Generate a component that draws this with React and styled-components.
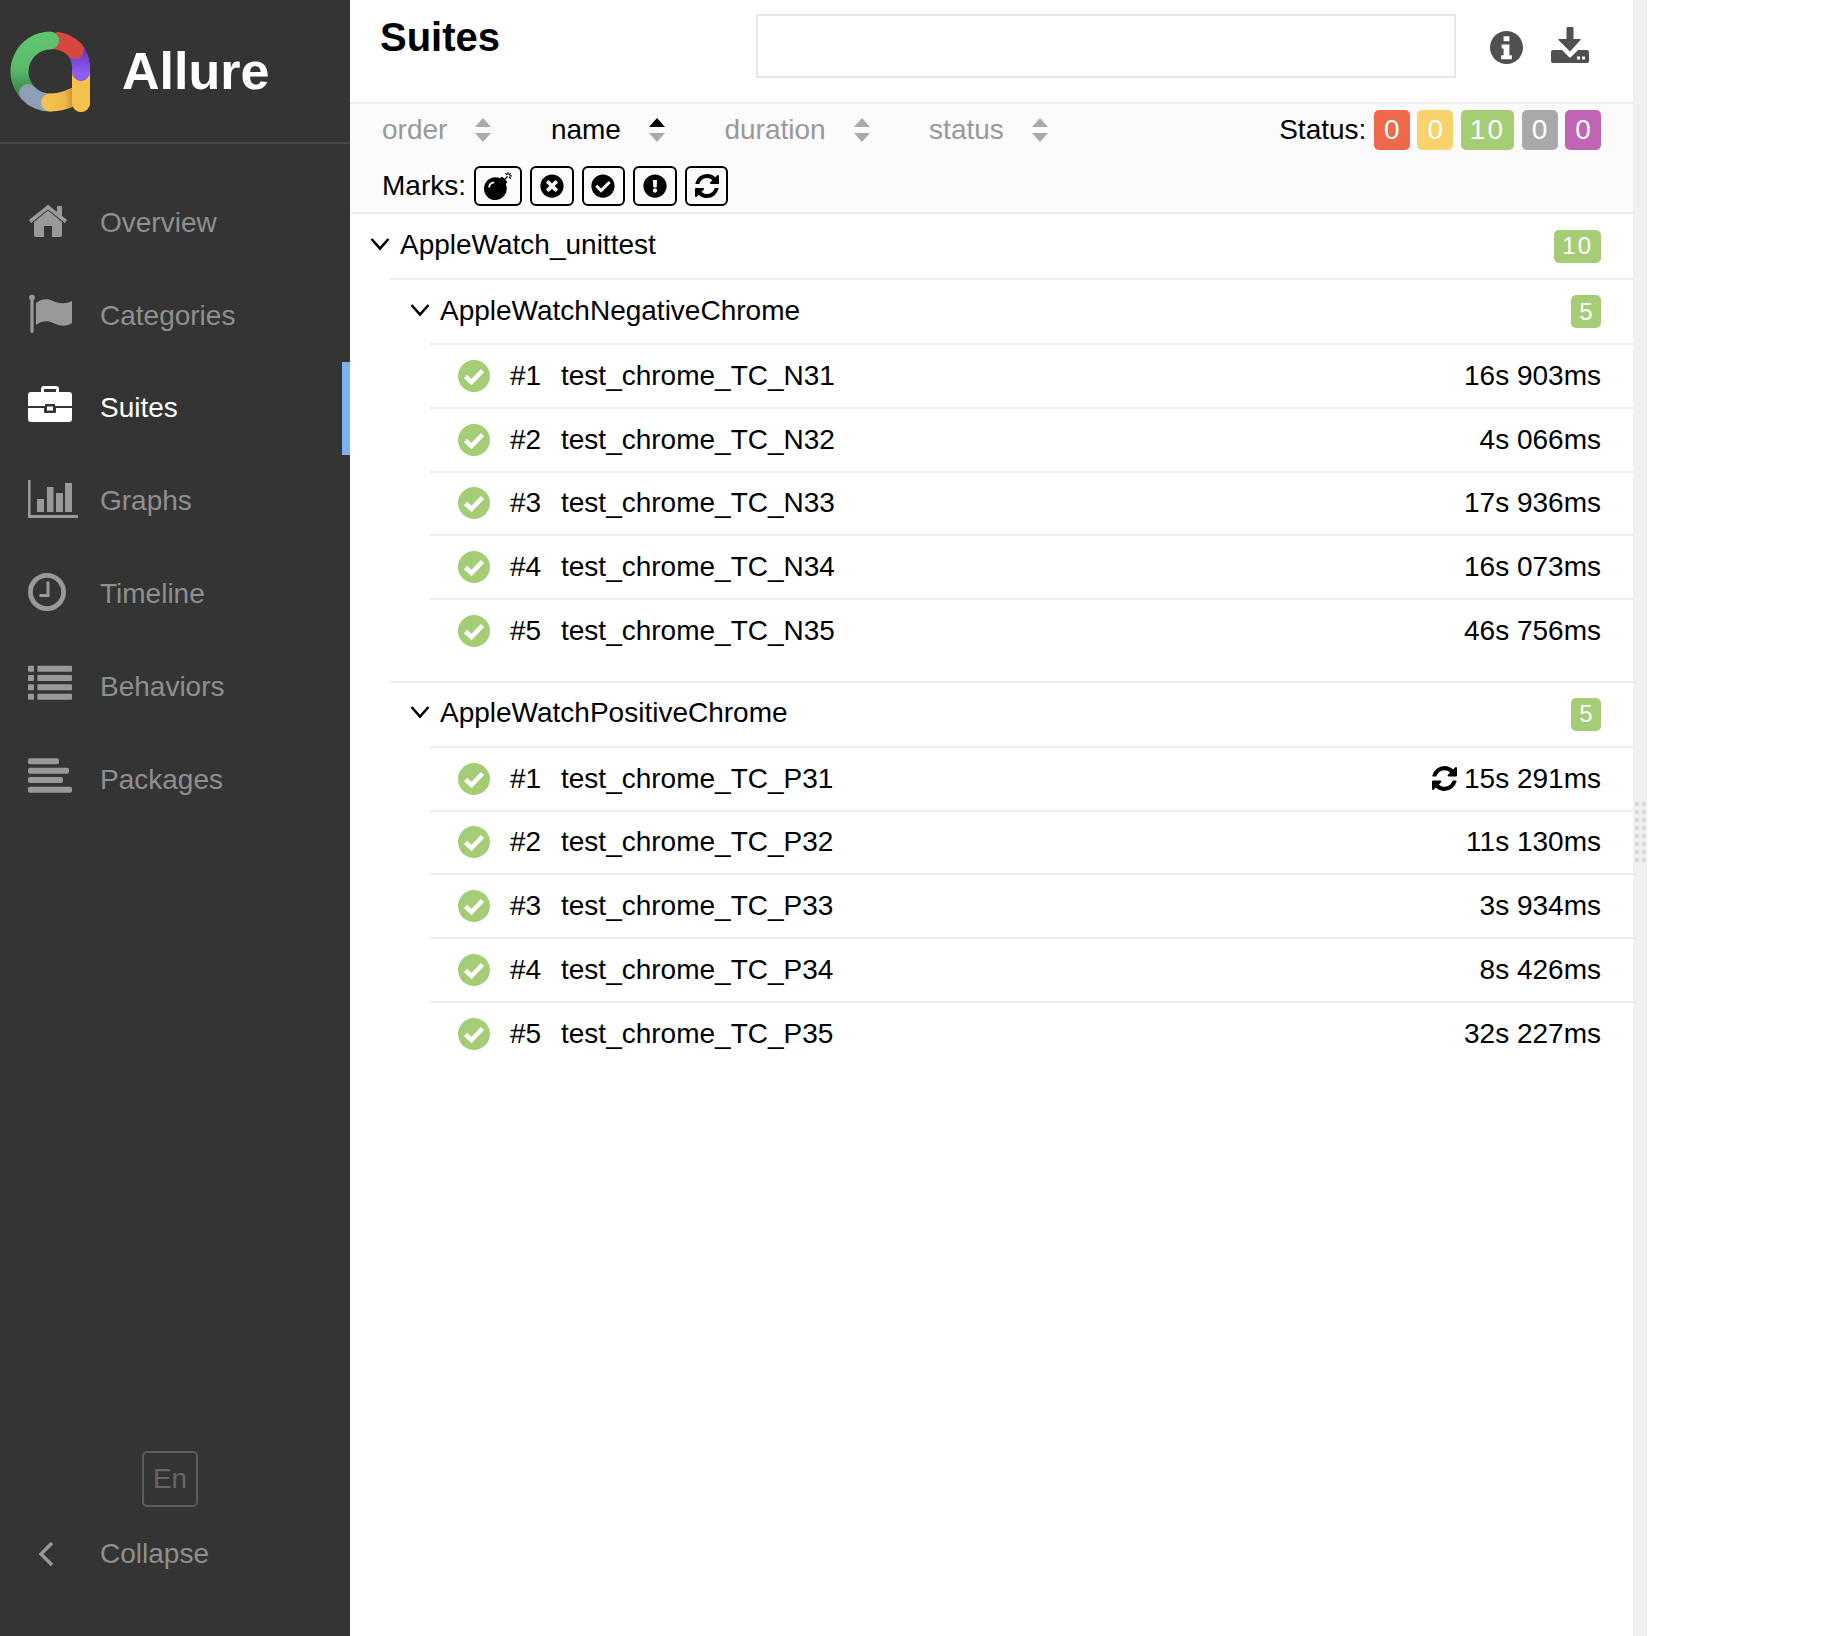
import styled, { createGlobalStyle } from "styled-components";
import {
  FaBomb,
  FaTimesCircle,
  FaCheckCircle,
  FaExclamationCircle,
} from "react-icons/fa";

const GlobalStyle = createGlobalStyle`
  html, body { margin: 0; padding: 0; background: #fff; }
  body { font-family: "Liberation Sans", Arial, sans-serif; font-size: 28px; color: #000; }
  * { box-sizing: border-box; }
`;

const Page = styled.div`
  display: flex;
  height: 1636px;
  overflow: hidden;
`;

const Sidebar = styled.aside`
  flex: 0 0 350px;
  display: flex;
  flex-direction: column;
  background: #343434;
  color: #8f8f8f;
`;

const Brand = styled.div`
  height: 144px;
  display: flex;
  align-items: center;
  gap: 28px;
  padding: 0 0 0 10px;
  border-bottom: 2px solid #474747;
`;

const BrandName = styled.span`
  font-size: 52px;
  font-weight: 700;
  color: #fff;
`;

const Nav = styled.nav`
  padding-top: 32.5px;
`;

const NavItem = styled.a`
  display: flex;
  align-items: center;
  height: 92.8px;
  padding-left: 28px;
  color: ${(p) => (p.$active ? "#fff" : "#8f8f8f")};
  border-right: 8px solid ${(p) => (p.$active ? "#7ab2ed" : "transparent")};
`;

const NavIcon = styled.svg`
  flex: 0 0 50px;
  width: 50px;
  height: 48px;
  margin-right: 22px;
  fill: ${(p) => (p.$active ? "#fff" : "#999")};
  color: ${(p) => (p.$active ? "#fff" : "#999")};
`;

const SideFooter = styled.div`
  margin-top: auto;
  padding-bottom: 36px;
`;

const LangButton = styled.div`
  width: 56px;
  height: 56px;
  margin-left: 142px;
  display: flex;
  align-items: center;
  justify-content: center;
  border: 2px solid #5c5c5c;
  border-radius: 5px;
  color: #666;
`;

const Main = styled.main`
  flex: 0 0 1283px;
  display: flex;
  flex-direction: column;
`;

const Header = styled.header`
  height: 102px;
  display: flex;
  align-items: flex-start;
  padding-left: 30px;
`;

const Title = styled.h1`
  flex: 0 0 376px;
  margin: 14px 0 0;
  font-size: 40px;
  line-height: 46px;
  font-weight: 700;
`;

const Search = styled.input`
  width: 700px;
  height: 64px;
  margin-top: 14px;
  border: 2px solid #e8e8e8;
  background: #fff;
  outline: none;
`;

const HeaderActions = styled.div`
  display: flex;
  align-items: flex-start;
  gap: 27px;
  margin: 27px 0 0 33px;
`;

const InfoGlyph = styled.svg`
  width: 35px;
  height: 35px;
  margin-top: 3px;
`;

const SortBar = styled.section`
  height: 112px;
  background: #fbfbfb;
  border-top: 2px solid #eeeeee;
  border-bottom: 2px solid #eeeeee;
  padding: 0 32px;
`;

const SortRow = styled.div`
  display: flex;
  align-items: center;
  justify-content: space-between;
  height: 52px;
`;

const SortColumns = styled.div`
  display: flex;
  gap: 58.5px;
`;

const SortColumn = styled.div`
  display: flex;
  align-items: center;
  gap: 27px;
  color: ${(p) => (p.$active ? "#000" : "#999")};
`;

const SortIcon = styled.svg`
  width: 18px;
  height: 24px;
  display: block;
`;

const Status = styled.div`
  display: flex;
  align-items: center;
  gap: 7.5px;
`;

const StatusBadge = styled.span`
  min-width: 36px;
  height: 40px;
  padding: 0 ${(p) => (p.$wide ? "9px" : "6px")};
  display: flex;
  align-items: center;
  justify-content: center;
  border-radius: 5px;
  background: ${(p) => p.$color};
  color: #fff;
  letter-spacing: ${(p) => (p.$wide ? "2px" : "0")};
`;

const Marks = styled.div`
  display: flex;
  align-items: center;
  gap: 8px;
  height: 44px;
  margin-top: 8px;
`;

const MarkButton = styled.button`
  width: ${(p) => (p.$wide ? "48px" : "43.6px")};
  height: 40px;
  padding: 0;
  display: flex;
  align-items: center;
  justify-content: center;
  background: transparent;
  border: 2px solid #000;
  border-radius: 6px;
  color: #000;
  font-size: ${(p) => (p.$wide ? "28px" : "24px")};
`;

const Tree = styled.div`
  display: flex;
  flex-direction: column;
`;

const NodeHead = styled.div`
  display: flex;
  align-items: center;
  height: ${(p) => p.$height}px;
  padding: 0 32px 0 ${(p) => p.$pad}px;
  ${(p) => p.$line && "border-top: 2px solid #eeeeee;"}
`;

const Chevron = styled.svg`
  flex: 0 0 20px;
  width: 20px;
  height: 14px;
  margin: 0 10px 4px 0;
`;

const NodeName = styled.span`
  flex: 1;
  margin-bottom: 2px;
`;

const Children = styled.div`
  margin-left: 40px;
  margin-bottom: ${(p) => p.$gap || 0}px;
`;

const CountBadge = styled.span`
  height: 33px;
  padding: 0 ${(p) => (p.$wide ? "8px" : "8.5px")};
  display: flex;
  align-items: center;
  border-radius: 5px;
  background: #a5cd75;
  color: #fff;
  font-size: 24px;
  letter-spacing: ${(p) => (p.$wide ? "2px" : "0")};
`;

const Leaf = styled.div`
  display: flex;
  align-items: center;
  height: 63.75px;
  padding: 0 32px 0 28px;
  border-top: 2px solid #eeeeee;
`;

const LeafIcon = styled.svg`
  flex: 0 0 32px;
  width: 32px;
  height: 32px;
  margin-right: 20px;
`;

const LeafOrder = styled.span`
  flex: 0 0 51px;
`;

const LeafName = styled.span`
  flex: 1;
`;

const LeafTime = styled.span`
  display: flex;
  align-items: center;
  gap: 7px;
`;

const Splitter = styled.div`
  flex: 0 0 14px;
  display: flex;
  justify-content: center;
  padding-top: 802px;
  background: #eff0f2;
`;

const Grip = styled.div`
  width: 12px;
  height: 60px;
  background: conic-gradient(#d8d9db 25%, transparent 0) -2px 0 / 7px 8px;
`;

const NAV_ITEMS = [
  {
    label: "Overview",
    icon: (
      <>
        <path d="M6 23 20 11.5 34 23v13q0 2-2 2h-8V27h-8v11H8q-2 0-2-2z" />
        <path d="M29 7h5v10h-5z" />
        <path d="M2 22.5 20 8l18 14.5" fill="none" stroke="currentColor" strokeWidth="3.6" />
      </>
    ),
  },
  {
    label: "Categories",
    icon: (
      <>
        <circle cx="4" cy="5.5" r="2.8" />
        <rect x="2.4" y="5" width="3.2" height="36" rx="1.4" />
        <path d="M8 11c5-4 11-5 17-2 7 3 13 3 19 0v22c-6 4-12 3-19 0-6-3-12-2-17 2z" />
      </>
    ),
  },
  {
    label: "Suites",
    active: true,
    icon: (
      <>
        <path d="M13 8V5q0-3 3-3h12q3 0 3 3v3h-3V5H16v3z" />
        <path d="M3 8h38q3 0 3 3v11H27v-2H17v2H0V11q0-3 3-3z" />
        <path d="M0 24h16v4q0 1 1 1h10q1 0 1-1v-4h16v11q0 3-3 3H3q-3 0-3-3z" />
        <rect x="19" y="22.5" width="6" height="4" />
      </>
    ),
  },
  {
    label: "Graphs",
    icon: (
      <>
        <path d="M0 3h2.6v35H50v3H0z" />
        <rect x="9" y="22" width="7" height="13" />
        <rect x="19" y="10" width="6.5" height="25" />
        <rect x="28" y="16" width="7" height="19" />
        <rect x="37" y="6" width="7" height="29" />
      </>
    ),
  },
  {
    label: "Timeline",
    icon: (
      <>
        <circle cx="19" cy="22" r="16.6" fill="none" stroke="currentColor" strokeWidth="4.8" />
        <path d="M20 11.5v14h-8.5" fill="none" stroke="currentColor" strokeWidth="3" />
      </>
    ),
  },
  {
    label: "Behaviors",
    icon: [2.7, 12, 21.2, 30.7].map((y) => (
      <g key={y}>
        <rect x="0" y={y} width="6" height="6" rx="0.8" />
        <rect x="9.4" y={y} width="34.6" height="6" rx="0.8" />
      </g>
    )),
  },
  {
    label: "Packages",
    icon: [
      [2.3, 31],
      [11.7, 41],
      [21, 35],
      [30.7, 44],
    ].map(([y, w]) => <rect key={y} x="0" y={y} width={w} height="6" rx="2" />),
  },
];

const STATUS = [
  { color: "#ee684c", value: 0 },
  { color: "#f8d26a", value: 0 },
  { color: "#a5cd75", value: 10, wide: true },
  { color: "#a9a9a9", value: 0 },
  { color: "#c264b6", value: 0 },
];

const SORTS = [
  { label: "order" },
  { label: "name", active: true },
  { label: "duration" },
  { label: "status" },
];

const GROUPS = [
  {
    name: "AppleWatchNegativeChrome",
    tests: [
      ["test_chrome_TC_N31", "16s 903ms"],
      ["test_chrome_TC_N32", "4s 066ms"],
      ["test_chrome_TC_N33", "17s 936ms"],
      ["test_chrome_TC_N34", "16s 073ms"],
      ["test_chrome_TC_N35", "46s 756ms"],
    ],
  },
  {
    name: "AppleWatchPositiveChrome",
    tests: [
      ["test_chrome_TC_P31", "15s 291ms", true],
      ["test_chrome_TC_P32", "11s 130ms"],
      ["test_chrome_TC_P33", "3s 934ms"],
      ["test_chrome_TC_P34", "8s 426ms"],
      ["test_chrome_TC_P35", "32s 227ms"],
    ],
  },
];

function Logo() {
  return (
    <svg width="84" height="84" viewBox="10 29 84 84">
      <defs>
        <linearGradient id="greenShade" x1="0" y1="0" x2="0" y2="1">
          <stop offset="0" stopColor="#5fc46e" />
          <stop offset="0.55" stopColor="#5cbb68" />
          <stop offset="1" stopColor="#3f8a4f" />
        </linearGradient>
        <linearGradient id="yellowShade" x1="0" y1="0" x2="1" y2="0">
          <stop offset="0" stopColor="#f5c04c" />
          <stop offset="0.6" stopColor="#f0b848" />
          <stop offset="1" stopColor="#c98c38" />
        </linearGradient>
        <linearGradient id="purpleShade" x1="0" y1="0" x2="0" y2="1">
          <stop offset="0" stopColor="#6a34c0" />
          <stop offset="1" stopColor="#8d5cf0" />
        </linearGradient>
      </defs>
      <g fill="none" strokeWidth="18" strokeLinecap="round">
        <path d="M81 72v31" stroke="#f5c04c" />
        <path d="M75 50a31 31 0 0 1 6 22" stroke="url(#purpleShade)" />
        <path d="M58 41a31 31 0 0 1 17 9" stroke="#d6483e" />
        <path d="M50 40.500a31 31 0 0 0-24 50" stroke="url(#greenShade)" />
        <path d="M28 93a31 31 0 0 0 22 9.500" stroke="#8f9fb5" />
        <path d="M50 102.500q12 0 24-6" stroke="url(#yellowShade)" />
        <path d="M81 90v13" stroke="#f5c04c" />
      </g>
    </svg>
  );
}

function SortArrows({ active }) {
  return (
    <SortIcon viewBox="0 0 18 24">
      <path d="M9 0l8 9H1z" fill={active ? "#000" : "#aaa"} />
      <path d="M9 24l8-9H1z" fill="#aaa" />
    </SortIcon>
  );
}

function RefreshIcon({ size }) {
  return (
    <svg width={size} height={size} viewBox="128 128 1536 1536" fill="#000">
      <path d="M1639 1056q0 5-1 7-64 268-268 434.500t-478 166.500q-146 0-282.500-55t-243.500-157l-129 129q-19 19-45 19t-45-19-19-45v-448q0-26 19-45t45-19h448q26 0 45 19t19 45-19 45l-137 137q71 66 161 102t187 36q134 0 250-65t186-179q11-17 53-117 8-23 30-23h192q13 0 22.500 9.500t9.500 22.500zm25-800v448q0 26-19 45t-45 19h-448q-26 0-45-19t-19-45 19-45l138-138q-148-137-349-137-134 0-250 65t-186 179q-11 17-53 117-8 23-30 23h-199q-13 0-22.500-9.500t-9.500-22.500v-7q65-268 270-434.500t480-166.500q146 0 284 55.500t245 156.500l130-129q19-19 45-19t45 19 19 45z" />
    </svg>
  );
}

function InfoIcon() {
  return (
    <InfoGlyph viewBox="0 0 36 36">
      <path
        fillRule="evenodd"
        fill="#505050"
        d="M18 1a17 17 0 1 0 0 34 17 17 0 0 0 0-34zm-3 5.500h6v5h-6zm-2 8.500h8v11h2.500v4H12.500v-4H15v-7h-2z"
      />
    </InfoGlyph>
  );
}

function DownloadIcon() {
  return (
    <svg width="38" height="36" viewBox="0 0 38 36" fill="#505050">
      <path d="M15.500 1q0-1 1-1h5q1 0 1 1v11h6.500q1.200 0 .5 1L19.500 24q-.5.500-1 0L7.500 13q-.7-1 .5-1h7.500z" />
      <path d="M2 23h9l7 7q1 1 2 0l7-7h9q2 0 2 2v9q0 2-2 2H2q-2 0-2-2v-9q0-2 2-2z" />
      <rect x="26" y="29.500" width="3" height="3" fill="#fff" />
      <rect x="31" y="29.500" width="3" height="3" fill="#fff" />
    </svg>
  );
}

function OpenChevron() {
  return (
    <Chevron viewBox="0 0 20 14">
      <path d="M1.500 2 10 11.500 18.500 2" fill="none" stroke="#000" strokeWidth="2.600" />
    </Chevron>
  );
}

function PassedIcon() {
  return (
    <LeafIcon viewBox="0 0 32 32">
      <circle cx="16" cy="16" r="16" fill="#a5cd75" />
      <path d="M7.500 16.500 13.500 22 24.500 10.500" fill="none" stroke="#fff" strokeWidth="4.500" />
    </LeafIcon>
  );
}

export default function App() {
  return (
    <Page>
      <GlobalStyle />
      <Sidebar>
        <Brand>
          <Logo />
          <BrandName>Allure</BrandName>
        </Brand>
        <Nav>
          {NAV_ITEMS.map((item) => (
            <NavItem key={item.label} $active={item.active}>
              <NavIcon viewBox="0 0 50 48" $active={item.active}>
                {item.icon}
              </NavIcon>
              {item.label}
            </NavItem>
          ))}
        </Nav>
        <SideFooter>
          <LangButton>En</LangButton>
          <NavItem>
            <NavIcon viewBox="0 0 50 48">
              <path d="M24 13 13 24l11 11" fill="none" stroke="currentColor" strokeWidth="3.400" />
            </NavIcon>
            Collapse
          </NavItem>
        </SideFooter>
      </Sidebar>

      <Main>
        <Header>
          <Title>Suites</Title>
          <Search />
          <HeaderActions>
            <InfoIcon />
            <DownloadIcon />
          </HeaderActions>
        </Header>

        <SortBar>
          <SortRow>
            <SortColumns>
              {SORTS.map((sort) => (
                <SortColumn key={sort.label} $active={sort.active}>
                  {sort.label}
                  <SortArrows active={sort.active} />
                </SortColumn>
              ))}
            </SortColumns>
            <Status>
              Status:
              {STATUS.map((s) => (
                <StatusBadge key={s.color} $color={s.color} $wide={s.wide}>
                  {s.value}
                </StatusBadge>
              ))}
            </Status>
          </SortRow>
          <Marks>
            Marks:
            <MarkButton $wide>
              <FaBomb />
            </MarkButton>
            <MarkButton>
              <FaTimesCircle />
            </MarkButton>
            <MarkButton>
              <FaCheckCircle />
            </MarkButton>
            <MarkButton>
              <FaExclamationCircle />
            </MarkButton>
            <MarkButton>
              <RefreshIcon size={24} />
            </MarkButton>
          </Marks>
        </SortBar>

        <Tree>
          <NodeHead $height={64} $pad={20}>
            <OpenChevron />
            <NodeName>AppleWatch_unittest</NodeName>
            <CountBadge $wide>10</CountBadge>
          </NodeHead>
          <Children>
            {GROUPS.map((group) => (
              <div key={group.name}>
                <NodeHead $line $height={65} $pad={20}>
                  <OpenChevron />
                  <NodeName>{group.name}</NodeName>
                  <CountBadge>5</CountBadge>
                </NodeHead>
                <Children $gap={19}>
                  {group.tests.map(([name, time, retried], i) => (
                    <Leaf key={name}>
                      <PassedIcon />
                      <LeafOrder>#{i + 1}</LeafOrder>
                      <LeafName>{name}</LeafName>
                      <LeafTime>
                        {retried && <RefreshIcon size={25} />}
                        {time}
                      </LeafTime>
                    </Leaf>
                  ))}
                </Children>
              </div>
            ))}
          </Children>
        </Tree>
      </Main>

      <Splitter>
        <Grip />
      </Splitter>
    </Page>
  );
}
